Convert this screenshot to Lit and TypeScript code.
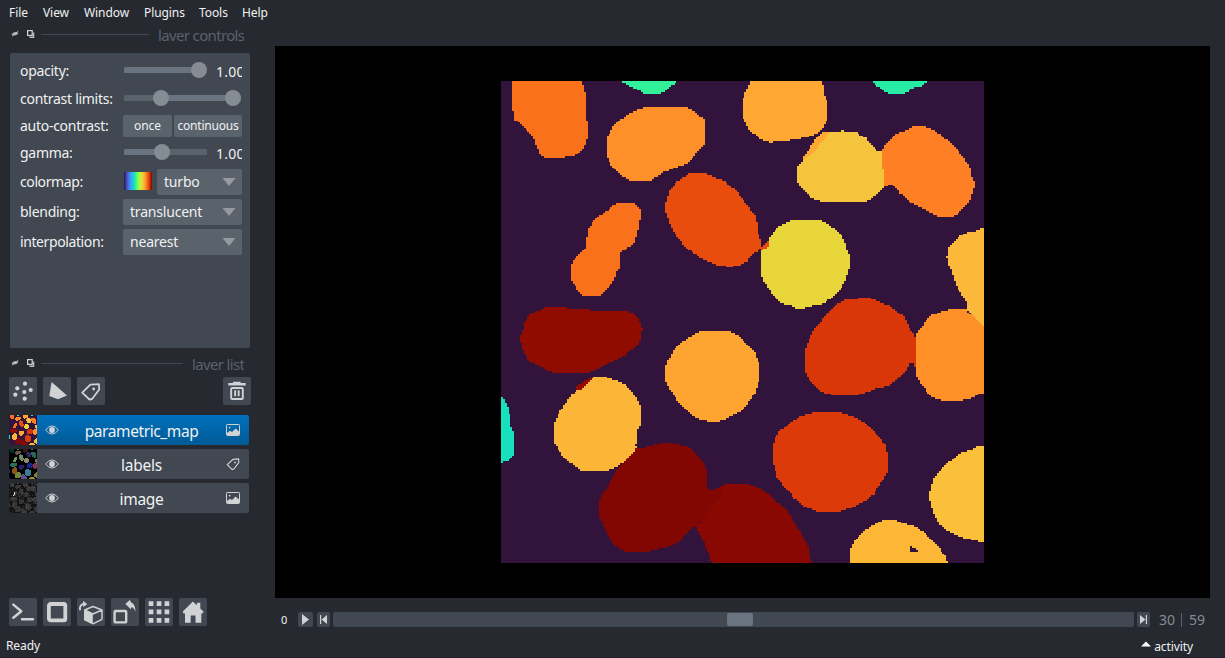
import { LitElement, html, svg, css } from "lit";
import { customElement, property } from "lit/decorators.js";

type Cell = { c: string; l: string; dx: number; dy: number; p: string };

// Segmented nuclei: outline points, offset into the frame (1449 x 1446 units), map and label colours.
const CELLS: Cell[] = [
  { c: "#f9721b", l: "#00352c", dx: -3, dy: -18, p: "39,12 246,12 252,40 258,60 258,135 264,137 264,178 258,208 240,232 222,243 195,243 195,249 135,249 120,238 105,205 99,185 72,156 42,132 38,90 35,88 35,50" },
  { c: "#31f199", l: "#5a7a40", dx: -3, dy: -18, p: "366,12 531,12 531,21 505,38 484,57 432,57 408,42 366,22" },
  { c: "#ff8f28", l: "#6b5a48", dx: -3, dy: -18, p: "438,96 552,96 580,107 612,133 615,142 615,208 592,232 560,266 530,276 495,290 468,306 448,318 394,318 362,300 336,275 321,246 321,187 330,172 342,150 372,126 402,108" },
  { c: "#fea732", l: "#381818", dx: 717, dy: -18, p: "36,12 246,12 249,40 255,66 261,76 261,136 249,160 234,174 202,186 160,195 108,200 87,203 60,190 30,168 12,136 6,122 5,85 18,45" },
  { c: "#28eca6", l: "#7a5a80", dx: 717, dy: -18, p: "400,12 562,12 560,22 540,34 516,40 494,57 450,57 430,48 400,22" },
  { c: "#fea732", l: "#2b2966", dx: 717, dy: -18, p: "246,171 290,171 240,220 190,258 182,258 204,228 228,192" },
  { c: "#f4c53c", l: "#2b2966", dx: 717, dy: -18, p: "270,171 303,171 304,165 311,165 312,171 348,171 378,190 402,216 410,225 428,225 428,280 433,284 433,338 408,360 380,378 246,378 210,366 186,340 177,328 171,312 171,276 186,258 210,240 234,216" },
  { c: "#ff8024", l: "#256b52", dx: 717, dy: -18, p: "524,153 545,153 575,162 610,185 645,216 672,250 692,280 696,310 701,315 701,340 692,370 676,395 642,423 594,423 545,399 510,382 480,354 462,333 450,327 432,338 432,284 426,280 426,223 445,198 466,177 494,168" },
  { c: "#f9721b", l: "#6a9a58", dx: -3, dy: -18, p: "355,384 398,384 420,405 423,412 423,436 417,440 417,460 411,464 408,488 398,510 360,532 360,580 354,585 333,630 302,663 254,663 235,648 216,618 213,612 213,570 225,550 240,535 258,518 258,487 264,483 264,462 294,423 310,417 336,393" },
  { c: "#e84d0d", l: "#708b64", dx: -3, dy: -18, p: "570,294 608,294 630,300 680,322 715,355 740,390 768,425 774,470 783,495 783,520 762,535 740,560 722,569 698,570 698,575 678,575 650,569 608,552 570,528 535,492 510,450 495,405 495,386 508,350 530,320" },
  { c: "#e84d0d", l: "#708b64", dx: 717, dy: -18, p: "87,497 87,516 66,532 62,526 62,518 72,508" },
  { c: "#e8d539", l: "#928870", dx: 717, dy: -18, p: "155,435 240,435 252,441 285,462 304,480 318,510 324,538 330,542 330,580 324,586 318,616 300,645 276,669 246,687 195,697 195,702 170,702 168,697 140,690 120,682 90,648 75,625 63,600 63,530 87,512 87,492 110,458" },
  { c: "#fbb83a", l: "#7a7070", dx: 717, dy: -18, p: "738,459 720,459 720,465 672,475 650,490 630,514 624,520 624,540 618,545 624,550 625,570 636,590 650,635 680,680 681,705 695,718 720,743 738,757" },
  { c: "#900c00", l: "#2d6e5c", dx: -3, dy: 657, p: "144,20 201,20 201,27 270,27 270,33 384,33 402,42 417,58 424,82 429,86 429,92 423,94 423,115 410,138 380,162 335,186 285,210 258,219 162,219 125,204 90,186 75,162 66,145 66,128 60,126 60,106 66,102 72,70 90,43 124,27" },
  { c: "#900c00", l: "#2d6e5c", dx: -3, dy: 657, p: "282,232 282,240 246,270 225,270 232,258 258,240" },
  { c: "#fea431", l: "#2b2068", dx: -3, dy: 657, p: "602,93 682,93 712,106 740,130 762,152 772,180 777,190 777,243 768,272 748,305 722,335 685,354 660,361 656,366 635,366 604,359 570,343 535,307 510,270 500,248 495,238 495,206 504,180 525,145 560,116" },
  { c: "#da3708", l: "#14258c", dx: 717, dy: 657, p: "300,6 320,-2 348,-3 362,-9 376,-9 400,-3 415,4 450,19 490,49 510,86 524,110 528,112 528,200 522,200 522,190 510,190 495,216 468,242 440,260 408,265 375,278 342,288 290,288 240,274 210,244 200,225 195,210 195,150 204,125 222,90 250,54 282,22" },
  { c: "#ff9027", l: "#8e3342", dx: 717, dy: 657, p: "606,33 632,27 681,27 681,33 735,82 735,276 712,284 685,297 660,302 606,302 575,290 550,262 534,238 528,222 528,104 546,78 570,48" },
  { c: "#18e0bd", l: "#17355a", dx: -3, dy: 657, p: "0,291 9,291 15,308 27,328 33,380 39,390 42,412 42,468 27,480 6,489 0,489" },
  { c: "#fbb637", l: "#8b5520", dx: -3, dy: 657, p: "282,231 314,231 345,240 378,254 405,288 417,306 423,330 423,360 417,385 411,390 411,432 405,436 411,444 380,476 354,500 320,512 285,514 248,513 220,496 190,470 168,438 162,432 162,372 174,346 190,318 215,282 235,268 246,268" },
  { c: "#dc3a08", l: "#397d98", dx: 717, dy: 657, p: "234,336 296,336 320,344 352,356 385,375 410,400 432,430 438,440 438,456 444,460 444,506 438,524 420,552 400,585 370,606 332,624 302,634 230,634 192,618 162,594 135,562 108,530 105,495 99,492 99,436 105,415 120,393 145,372 180,350" },
  { c: "#fac03a", l: "#7f8130", dx: 717, dy: 657, p: "738,438 715,438 690,450 660,460 625,488 600,510 579,538 573,570 567,574 567,602 573,605 579,638 595,670 620,692 660,711 700,720 738,729" },
  { c: "#820602", l: "#748537", dx: -3, dy: 657, p: "486,429 516,429 570,444 590,464 612,492 621,514 621,560 628,569 642,569 666,558 666,588 620,640 590,680 575,684 535,728 500,742 450,750 448,756 374,756 342,735 318,698 303,656 297,650 297,604 303,588 315,570 335,540 350,506 372,488 410,444 444,441" },
  { c: "#890801", l: "#58518a", dx: -3, dy: 657, p: "678,552 745,552 780,564 820,594 860,632 880,660 900,694 922,735 930,765 938,798 638,798 630,770 610,725 590,682 620,640 666,588 666,558" },
  { c: "#fcb737", l: "#9a9028", dx: 717, dy: 657, p: "432,660 465,660 480,666 530,682 560,702 592,735 618,772 628,798 330,798 330,755 336,735 352,712 380,687 412,669" },
  { c: "#31133b", l: "#9a9028", dx: 717, dy: 657, p: "510,738 516,738 516,744 528,744 528,750 534,750 534,756 510,756" },
];

// Scan-converts an outline into horizontal pixel runs on an n x n grid.
function runs(cell: Cell, n: number): string {
  const pts = cell.p.split(" ").map((s) => {
    const [x, y] = s.split(",").map(Number);
    return [((x + cell.dx) / 1449) * n, ((y + cell.dy) / 1446) * n];
  });
  let d = "";
  for (let row = 0; row < n; row++) {
    const y = row + 0.5;
    const xs: number[] = [];
    pts.forEach((a, i) => {
      const b = pts[(i + 1) % pts.length];
      if (a[1] <= y !== b[1] <= y) xs.push(a[0] + ((y - a[1]) / (b[1] - a[1])) * (b[0] - a[0]));
    });
    xs.sort((p, q) => p - q);
    for (let i = 0; i + 1 < xs.length; i += 2) {
      const s = Math.max(0, Math.round(xs[i]));
      const e = Math.min(n, Math.round(xs[i + 1]));
      if (e > s) d += `M${s} ${row}h${e - s}v1h${s - e}z`;
    }
  }
  return d;
}

@customElement("nuclei-map")
class NucleiMap extends LitElement {
  @property({ type: Number }) res = 256;
  @property() mode = "map";
  static styles = css`
    :host { display: block; }
    svg { display: block; width: 100%; height: 100%; }
  `;
  private speckle() {
    let seed = 7;
    const rnd = () => (seed = (seed * 16807) % 2147483647) / 2147483647;
    const out = [];
    for (let i = 0; i < 300; i++) {
      const x = Math.floor(rnd() * this.res);
      const y = Math.floor(rnd() * this.res);
      const dark = rnd() > 0.4;
      out.push(svg`<rect x=${x} y=${y} width="1" height="1" fill=${dark ? "#1c1c1c" : "#585858"} opacity="0.5"/>`);
    }
    out.push(svg`<path d="M5 8h1v3h-1zM4 11h1v1h-1z" fill="#ddd"/>`);
    return out;
  }
  render() {
    const bg = this.mode === "map" ? "#31133b" : this.mode === "labels" ? "#000" : "#131313";
    return html`<svg viewBox="0 0 ${this.res} ${this.res}" preserveAspectRatio="none" shape-rendering="crispEdges">
      <rect width=${this.res} height=${this.res} fill=${bg}></rect>
      ${CELLS.map((c) => svg`<path d=${runs(c, this.res)} fill=${this.mode === "map" ? c.c : this.mode === "labels" ? c.l : "#383838"}/>`)}
      ${this.mode === "gray" ? this.speckle() : ""}
    </svg>`;
  }
}

const F = "#d1d2d4";
const icons: Record<string, unknown> = {
  points: svg`<g fill=${F}><circle cx="16" cy="6.7" r="2.1"/><circle cx="8.3" cy="11.3" r="2.1"/><circle cx="21.7" cy="13" r="2.1"/><circle cx="15.3" cy="15" r="2.1"/><circle cx="6.3" cy="17.7" r="2.1"/><circle cx="15.7" cy="21.7" r="2.1"/></g>`,
  shapes: svg`<path fill=${F} d="M8.6 5 24 18.6l-9 3.7-8.7-3.2z"/>`,
  tag: svg`<path fill="none" stroke=${F} stroke-width="1.8" stroke-linejoin="round" d="M5.2 15.6 13.4 7.7l8.5-.5.3 5.3-7.1 9.5-2.6.5z"/><circle cx="16.7" cy="12" r="1.4" fill=${F}/>`,
  trash: svg`<path fill=${F} d="M5.3 6h17.4v2.6H5.3zM10 4.8h7.6V6H10z"/><rect x="8.2" y="11" width="11.6" height="11" rx="1" fill="none" stroke=${F} stroke-width="1.9"/><path fill=${F} d="M11.2 13.2h1.9v6h-1.9zM14.7 13.2h1.9v6h-1.9z"/>`,
  console: svg`<path fill="none" stroke=${F} stroke-width="2.4" stroke-linecap="round" stroke-linejoin="round" d="M4.3 6.6 12.3 13.2 4.3 19.8M13 21.2H24"/>`,
  square: svg`<rect x="5.9" y="6" width="16.4" height="16.4" rx="1.6" fill="none" stroke=${F} stroke-width="3.8"/>`,
  roll: svg`<path fill=${F} d="M7 12 15.8 16v10.5L7 22.3z"/><path fill="none" stroke=${F} stroke-width="1.4" stroke-linejoin="round" d="M7.7 12 16 8.5l9 3.5-9.2 4zM25 12v9.3l-9.2 4.6"/><path fill="none" stroke=${F} stroke-width="1.8" d="M3.2 12.2c-.8-3.6.5-5.6 3.6-6.2"/><path fill=${F} d="M6 2.8l4.3 3.4L6.3 9z"/>`,
  transpose: svg`<rect x="3.6" y="13" width="11.6" height="11.4" rx="1" fill="none" stroke=${F} stroke-width="2.4"/><path fill=${F} d="M14.3 6 18.8 2l1.4 2.4c3 1.2 4.3 4.2 4.2 9.6-.9-2.8-2-4.4-3.8-5l-.7 2.2z"/>`,
  grid: svg`<path fill=${F} d="M3.7 3.2h4.7v4.7H3.7zM11.7 3.2h4.7v4.7h-4.7zM19.6 3.2h4.7v4.7h-4.7zM3.7 11.5h4.7v4.7H3.7zM11.7 11.5h4.7v4.7h-4.7zM19.6 11.5h4.7v4.7h-4.7zM3.7 20h4.7v4.7H3.7zM11.7 20h4.7v4.7h-4.7zM19.6 20h4.7v4.7h-4.7z"/>`,
  home: svg`<path fill=${F} d="M3.5 13.8 13.9 3.6l3.9 3.7V4.8h3.5v5.7l3.4 3.3-1.3 1.6h-1.1v9.3h-5.8v-7.2h-4.8v7.2H6V15.4H4.8z"/>`,
};

@customElement("app-root")
class AppRoot extends LitElement {
  static styles = css`
    :host { display: flex; flex-direction: column; height: 658px; width: 1225px; background: #262930; color: #f0f1f2; overflow: hidden;
      font: 14px/20px "Noto Sans", "Open Sans", sans-serif; }
    * { box-sizing: border-box; }
    svg { display: block; flex: none; }
    .menu { height: 24px; display: flex; padding-left: 9px; font-size: 12px; line-height: 25px; letter-spacing: -.08px; }
    .menu span { white-space: nowrap; }
    .m0 { width: 34px; } .m1 { width: 41px; } .m2 { width: 60px; } .m3 { width: 55px; } .m4 { width: 43px; }
    .main { height: 610px; display: flex; }
    .left { width: 275px; display: flex; flex-direction: column; }
    .title { height: 22px; padding-left: 10px; display: flex; color: #5a626c; flex: none; }
    .title svg { margin-top: 5px; margin-right: 6px; }
    .rule { height: 1px; background: #414851; margin-top: 10px; }
    .rule1 { width: 108px; } .rule2 { width: 142px; }
    .name { height: 17px; overflow: hidden; line-height: 23px; font-size: 15px; white-space: nowrap; margin-left: 9px; letter-spacing: -0.65px; }
    .panel { margin: 7px 0 0 10px; width: 240px; height: 295px; background: #414851; border-radius: 2px; padding: 4px 8px 0 10px;
      display: grid; grid-template-columns: 103px 119px; grid-template-rows: 28px 27px 27px 28px 29px 31px 29px; align-items: center; flex: none; white-space: nowrap; }
    .label { letter-spacing: -0.28px; }
    .label.tight { letter-spacing: -0.4px; }
    .ctl { display: flex; align-items: center; overflow: hidden; height: 26px; }
    .slider { margin-left: 1px; flex: none; }
    .val { margin-left: 9px; font-size: 14px; letter-spacing: .25px; padding-top: 2px; }
    .btn { height: 22px; border-radius: 2px; background: #5a626c; font-size: 12px; line-height: 22px; text-align: center; }
    .b1 { width: 49px; margin-right: 2px; } .b2 { width: 68px; letter-spacing: -.2px; }
    .combo { height: 26px; flex: 1; background: #5a626c; border-radius: 2px; display: flex; align-items: center; justify-content: space-between; padding: 0 6px 0 7px; letter-spacing: -.2px; }
    .swatch { width: 28px; height: 18px; margin: 0 5px 1px 1px; background: linear-gradient(90deg, #30123b, #4145ab 8%, #4675ed 17%, #39a2fc 25%, #1bcfd4 33%, #24eca6 40%, #61fc6c 47%, #a4fc3b 54%, #d1e834 61%, #f3c63a 68%, #fe9b2d 76%, #f36315 84%, #d93806 91%, #7a0403); }
    .t2 { margin-top: 5px; }
    .tools { display: flex; gap: 6px; padding-left: 9px; height: 28px; flex: none; }
    .tools.top { margin-top: 2px; }
    .tb { width: 28px; height: 28px; border-radius: 2px; background: #414851; }
    .del { margin-left: 112px; }
    .layers { margin: 10px 0 0 9px; display: flex; flex-direction: column; gap: 4px; }
    .layer { width: 240px; height: 30px; display: flex; align-items: center; background: #414851; border-radius: 2px; overflow: hidden; }
    .layer.sel { background: linear-gradient(#0071bc, #005a96); }
    .thumb { width: 28px; height: 30px; flex: none; }
    .eye { margin-left: 8px; }
    .lname { flex: 1; text-align: center; font-size: 15.5px; line-height: 30px; padding: 2px 2px 0 0; letter-spacing: -.25px; }
    .lname.wide { letter-spacing: -.4px; }
    .kind { margin-right: 9px; }
    .bottom { margin-top: 85px; }
    .right { width: 935px; padding-top: 22px; }
    .canvas { height: 552px; background: #000; display: flex; padding: 35px 0 0 226px; }
    .field { width: 483px; height: 482px; }
    .dims { height: 36px; padding-top: 14px; display: flex; font-size: 14px; line-height: 16px; color: #868c93; }
    .zero { width: 23px; text-align: left; padding-left: 6px; color: #f0f1f2; font-size: 11px; }
    .sq { height: 15px; border-radius: 2px; background: #414851; }
    .play { width: 15px; margin-right: 4px; } .step { width: 13px; margin-right: 3px; }
    .track { width: 801px; height: 15px; margin-right: 3px; background: #414851; border-radius: 2px; padding: 1px 0 0 394px; }
    .grip { width: 26px; height: 13px; border-radius: 2px; background: #6a7380; }
    .n30 { margin-left: 6px; }
    .bar { width: 1px; height: 14px; margin: 1px 7px 0 6px; background: #5a626c; }
    .status { height: 24px; display: flex; justify-content: space-between; align-items: center; padding: 1px 32px 0 6px; font-size: 12px; line-height: 22px; letter-spacing: -.1px; border-bottom: 1px solid #221f26; }
    .act { display: flex; align-items: center; gap: 3px; padding-top: 1px; }
    .act svg { margin-top: -5px; }
  `;
  private dock() {
    return html`<svg width="9" height="9" viewBox="0 0 9 9"><path d="M1.4 5.4Q4.8 1.4 8.6 4 5.4 8.2 1.4 5.4z" fill="#a9acb0"/><path d="M2 7.3 8.4 2" stroke="#d1d2d4" stroke-width=".8"/></svg>
    <svg width="10" height="10" viewBox="0 0 10 10"><path d="M4.4 8.3h4.2V3.6" fill="none" stroke="#b8babd" stroke-width="1.4"/><rect x="2.6" y="1.6" width="4.6" height="4.8" fill="none" stroke="#d1d2d4" stroke-width="1.2"/></svg>`;
  }
  private slider(width: number, end: number, from: number, to: number, knobs: number[]) {
    return html`<svg class="slider" width=${width} height="18" viewBox="0 0 ${width} 18">
      <rect y="5" width=${end} height="6" rx="1.5" fill="#5a626c"></rect><rect x=${from} y="5" width=${to - from} height="6" rx="1.5" fill="#6a7380"></rect>
      ${knobs.map((k) => svg`<circle cx=${k} cy="8" r="8" fill="#868c93"/>`)}</svg>`;
  }
  private combo(text: string) {
    return html`<div class="combo"><span>${text}</span><svg width="14" height="10" viewBox="0 0 14 10"><path d="M.5 1h13L7 9z" fill="#9699a0"/></svg></div>`;
  }
  private tool(name: string, extra = "") {
    return html`<div class="tb ${extra}"><svg width="28" height="28" viewBox="0 0 28 28">${icons[name]}</svg></div>`;
  }
  private layer(name: string, mode: string, res: number) {
    return html`<div class="layer ${mode === "map" ? "sel" : ""}">
      <nuclei-map class="thumb" mode=${mode} .res=${res}></nuclei-map>
      <svg class="eye" width="14" height="10" viewBox="0 0 14 10"><path d="M.6 5Q7-3.2 13.4 5 7 13.2.6 5z" fill="none" stroke="#c6cdd3" stroke-width="1"/><circle cx="7" cy="5" r="2.9" fill="#d1d2d4"/></svg>
      <span class="lname ${mode === "map" ? "wide" : ""}">${name}</span>
      ${mode === "labels"
        ? html`<svg class="kind" width="14" height="14" viewBox="0 0 14 14"><path d="M1.3 7.7 7 2.4l5.6-.5.2 3.6L8 11.8l-1.8.8z" fill="none" stroke="#d1d2d4" stroke-width="1.1"/><circle cx="9.1" cy="5.4" r=".9" fill="#d1d2d4"/></svg>`
        : html`<svg class="kind" width="14" height="14" viewBox="0 0 14 14"><rect x=".5" y="1.5" width="13" height="11" rx=".8" fill="none" stroke="#d1d2d4"/><path d="M1 12V10l3-2.3L6 9l3.6-3.6L13 8.5V12z" fill="#d1d2d4"/><circle cx="3.6" cy="4.6" r=".9" fill="#d1d2d4"/></svg>`}
    </div>`;
  }
  render() {
    return html`
      <div class="menu">${["File", "View", "Window", "Plugins", "Tools", "Help"].map((t, i) => html`<span class="m${i}">${t}</span>`)}</div>
      <div class="main">
        <div class="left">
          <div class="title">${this.dock()}<div class="rule rule1"></div><div class="name">layer controls</div></div>
          <div class="panel">
            <span class="label">opacity:</span><div class="ctl">${this.slider(83, 76, 0, 76, [75])}<span class="val">1.00</span></div>
            <span class="label">contrast limits:</span><div class="ctl">${this.slider(118, 117, 37, 109, [37, 109])}</div>
            <span class="label">auto-contrast:</span><div class="ctl"><div class="btn b1">once</div><div class="btn b2">continuous</div></div>
            <span class="label">gamma:</span><div class="ctl">${this.slider(83, 83, 0, 38, [38])}<span class="val">1.00</span></div>
            <span class="label tight">colormap:</span><div class="ctl"><div class="swatch"></div>${this.combo("turbo")}</div>
            <span class="label">blending:</span><div class="ctl">${this.combo("translucent")}</div>
            <span class="label tight">interpolation:</span><div class="ctl">${this.combo("nearest")}</div>
          </div>
          <div class="title t2">${this.dock()}<div class="rule rule2"></div><div class="name">layer list</div></div>
          <div class="tools top">${this.tool("points")}${this.tool("shapes")}${this.tool("tag")}${this.tool("trash", "del")}</div>
          <div class="layers">${this.layer("parametric_map", "map", 28)}${this.layer("labels", "labels", 28)}${this.layer("image", "gray", 28)}</div>
          <div class="tools bottom">${["console", "square", "roll", "transpose", "grid", "home"].map((n) => this.tool(n))}</div>
        </div>
        <div class="right">
          <div class="canvas"><nuclei-map class="field"></nuclei-map></div>
          <div class="dims">
            <span class="zero">0</span>
            <svg class="sq play" viewBox="0 0 15 15"><path d="M4 2l7 5.5L4 13z" fill="#d1d2d4"/></svg>
            <svg class="sq step" viewBox="0 0 13 15"><path d="M3 3h1.2v9H3zM10 3v9L4.6 7.5z" fill="#d1d2d4"/></svg>
            <div class="track"><div class="grip"></div></div>
            <svg class="sq step" viewBox="0 0 13 15"><path d="M10 3H8.8v9H10zM3 3v9l5.4-4.5z" fill="#d1d2d4"/></svg>
            <span class="n30">30</span><span class="bar"></span><span>59</span>
          </div>
        </div>
      </div>
      <div class="status"><span>Ready</span><span class="act"><svg width="10" height="6" viewBox="0 0 10 6"><path d="M0 5.5 5 .5l5 5z" fill="#fff"/></svg><span>activity</span></span></div>`;
  }
}
